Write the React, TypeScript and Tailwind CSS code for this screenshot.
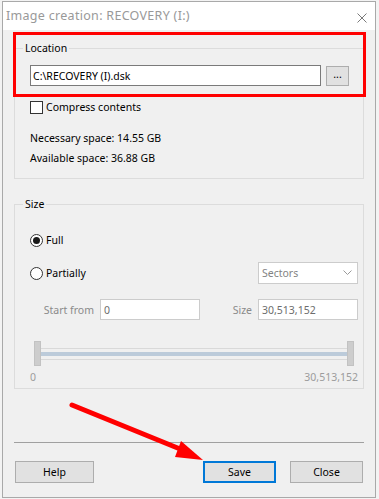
import React from "react";

function Radio({ checked }: { checked?: boolean }) {
  return (
    <span className="w-[13px] h-[13px] rounded-full border border-[#333333] bg-white flex items-center justify-center shrink-0">
      {checked && <span className="w-[7px] h-[7px] rounded-full bg-[#1a1a1a]" />}
    </span>
  );
}

function Btn({ children, w, primary }: { children: React.ReactNode; w: string; primary?: boolean }) {
  return (
    <div
      className={
        "h-[22px] flex items-center justify-center bg-[#e1e1e1] text-black " +
        w +
        (primary ? " border-2 border-[#0078d7]" : " border border-[#adadad]")
      }
    >
      {children}
    </div>
  );
}

export default function App() {
  return (
    <div
      className="relative w-[379px] h-[499px] bg-[#f3f3f3] overflow-hidden text-[10.5px] leading-[16px] text-black"
      style={{ fontFamily: '"Noto Sans", "Open Sans", sans-serif' }}
    >
      <div className="ml-[2px] mt-[1px] w-[374px] h-[497px] border border-[#a9a9a9] bg-[#f0f0f0] flex flex-col">
        {/* title bar */}
        <div className="h-[28px] bg-white flex items-center justify-between pl-[3px] pr-[8px] shrink-0">
          <span className="text-[#999999] text-[12.5px] tracking-[0.3px]">Image creation: RECOVERY (I:)</span>
          <svg width="10" height="10" viewBox="0 0 10 10" className="mt-[3px]">
            <path d="M0.5 0.5 L9.5 9.5 M9.5 0.5 L0.5 9.5" stroke="#7a7a7a" strokeWidth="1" />
          </svg>
        </div>

        {/* body */}
        <div className="flex-1 flex flex-col px-[11px] pt-[10px]">
          {/* Location */}
          <fieldset className="border border-[#dcdcdc] p-0 m-0 min-w-0">
            <legend className="ml-[8px] px-[2px] leading-[16px]">Location</legend>
            <div className="flex flex-col pl-[15px] pb-[12px]">
              <div className="mt-[9px] flex items-center gap-[5px]">
                <div className="w-[291px] h-[21px] bg-white border border-[#7a7a7a] flex items-center pl-[2px]">
                  C:\RECOVERY (I).dsk
                </div>
                <div className="w-[23px] h-[20px] bg-[#e1e1e1] border border-[#adadad] flex items-center justify-center leading-none pb-[2px]">
                  ...
                </div>
              </div>
              <div className="mt-[13px] h-[16px] flex items-center gap-[3px]">
                <span className="w-[13px] h-[13px] border border-[#333333] bg-white shrink-0" />
                <span>Compress contents</span>
              </div>
              <div className="mt-[15px]">Necessary space: 14.55 GB</div>
              <div className="mt-[4px]">Available space: 36.88 GB</div>
            </div>
          </fieldset>

          {/* Size */}
          <fieldset className="mt-[17px] border border-[#dcdcdc] p-0 m-0 min-w-0">
            <legend className="ml-[8px] px-[2px] leading-[16px]">Size</legend>
            <div className="flex flex-col pl-[15px] pr-[5px] pb-[3px]">
              <div className="mt-[20px] h-[16px] flex items-center gap-[3px]">
                <Radio checked />
                <span>Full</span>
              </div>
              <div className="mt-[14px] h-[22px] flex items-center">
                <div className="flex items-center gap-[3px]">
                  <Radio />
                  <span>Partially</span>
                </div>
                <div className="ml-auto w-[100px] h-[22px] bg-white border border-[#cccccc] flex items-center justify-between pl-[3px] pr-[5px] text-[#838383]">
                  <span>Sectors</span>
                  <svg width="9" height="6" viewBox="0 0 9 6">
                    <path d="M0.5 0.5 L4.5 4.5 L8.5 0.5" stroke="#9a9a9a" strokeWidth="1" fill="none" />
                  </svg>
                </div>
              </div>
              <div className="mt-[15px] flex items-center pl-[15px]">
                <div className="flex items-center gap-[6px]">
                  <div className="w-[49px] flex justify-end">
                    <span className="text-[#8a8a8a] whitespace-nowrap">Start from</span>
                  </div>
                  <div className="w-[100px] h-[21px] bg-white border border-[#cccccc] flex items-center pl-[3px] text-[#6d6d6d]">0</div>
                </div>
                <div className="ml-auto flex items-center gap-[6px]">
                  <span className="text-[#8a8a8a]">Size</span>
                  <div className="w-[100px] h-[21px] bg-white border border-[#cccccc] flex items-center pl-[3px] text-[#6d6d6d]">30,513,152</div>
                </div>
              </div>
              {/* slider */}
              <div className="mt-[21px] ml-[4px] mr-[4px] h-[25px] flex">
                <div className="w-[7px] h-[25px] bg-[#cdcdcd] border border-[#c2c2c2]" />
                <div className="flex-1 flex flex-col pt-[7px]">
                  <div className="h-[1px] bg-[#d9d9d9]" />
                  <div className="mt-[3px] h-[4px] bg-[#bccbda]" />
                  <div className="mt-[3px] h-[1px] bg-[#d9d9d9]" />
                </div>
                <div className="w-[7px] h-[25px] bg-[#cdcdcd] border border-[#c2c2c2]" />
              </div>
              <div className="mt-[3px] flex justify-between text-[#9c9c9c]">
                <span>0</span>
                <span>30,513,152</span>
              </div>
            </div>
          </fieldset>

          <div className="mt-[53px] h-[1px] bg-[#a0a0a0]" />

          <div className="mt-[18px] mx-[1px] flex items-center">
            <Btn w="w-[79px]">Help</Btn>
            <div className="ml-auto flex gap-[14px]">
              <Btn w="w-[73px]" primary>Save</Btn>
              <Btn w="w-[73px]">Close</Btn>
            </div>
          </div>
        </div>
      </div>

      {/* annotation overlays */}
      <div className="absolute left-[13px] top-[32px] w-[353px] h-[65px] border-[3px] border-[#ff0000] pointer-events-none" />
      <svg className="absolute left-0 top-0 pointer-events-none" width="379" height="499" viewBox="0 0 379 499">
        <line x1="72" y1="405" x2="185" y2="451" stroke="#ff0000" strokeWidth="5" strokeLinecap="round" />
        <polygon points="203,460 181,441 175,457" fill="#ff0000" />
      </svg>
    </div>
  );
}
